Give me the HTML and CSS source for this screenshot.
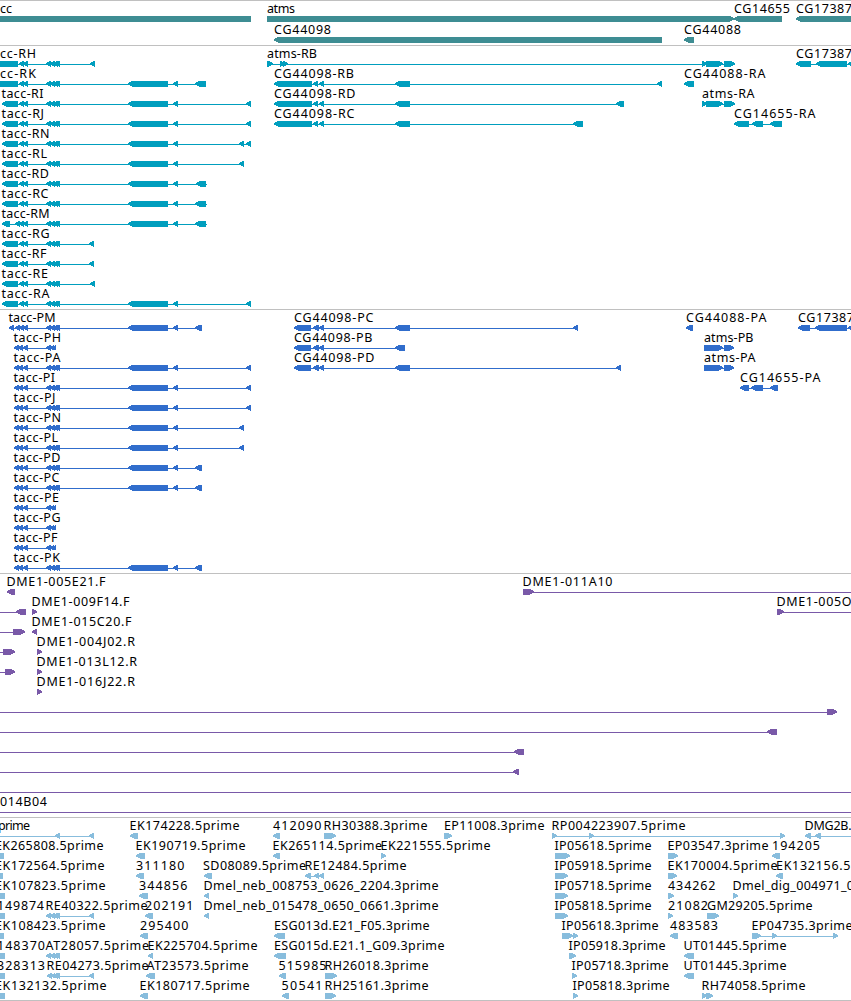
FILE: index.html
```html
<!DOCTYPE html>
<html lang="en">
<head>
<meta charset="utf-8">
<title>Genome browser</title>
<link rel="stylesheet" href="styles.css">
</head>
<body>
<main class="browser" id="browser"></main>
<script src="tracks.js"></script>
</body>
</html>
```
FILE: styles.css
```css
body { margin: 0; background: #fff; }
.browser { display: flex; flex-direction: column; width: 851px; height: 1001px; overflow: hidden; }
.track { flex: none; border-top: 1px solid #c0c0c0; box-sizing: border-box; overflow: hidden; }
.track svg { display: block; }
.track path { shape-rendering: crispEdges; }
.track text { font-family: "Noto Sans", "DejaVu Sans", sans-serif; font-size: 12.5px; fill: #000; }
.genes { height: 45px; fill: #3e8d93; }
.transcripts { height: 264px; fill: #009ebe; }
.proteins { height: 264px; fill: #306dcc; }
.clones { height: 244px; fill: #7959a8; }
.ests { height: 183px; fill: #88bddd; }
.end { height: 1px; }
```
FILE: tracks.js
```js
// Label: [row, text, start, end].
// Feature: [row, direction, line start, line end, exon start, exon end, ...].
const tail = [128, 168, 173, 178];
const cluster = [46, 51, 50, 55, 53, 58, 55, 60];
const utr = [2, 18, 19, 24, 23, 28, ...cluster];
const cds = [14, 19, 18, 23, 23, 28];
const atms = [702, 707, 706, 723, 724, 735];
const cg = [274, 312, 313, 318, 319, 324, 395, 410];
const cgp = [294, 311, 313, 319, 319, 324];

const tracks = [
  { name: "genes", top: 0, height: 45, pitch: 21, base: 13, glyph: 16,
    labels: [[0, "cc", 0, 12], [0, "atms", 267, 295], [0, "CG14655", 734, 790], [0, "CG17387", 796, 852],
      [1, "CG44098", 274, 331], [1, "CG44088", 684, 741]],
    features: [[0, "B", 0, 0, 0, 251], [0, "R", 0, 0, 267, 734], [0, "L", 0, 0, 734, 782],
      [0, "L", 0, 0, 796, 865], [1, "L", 0, 0, 274, 662], [1, "L", 0, 0, 684, 694]] },
  { name: "transcripts", top: 45, height: 264, pitch: 20, base: 58, glyph: 61,
    labels: [[0, "cc-RH", 0, 36], [1, "cc-RK", 0, 36],
      ...["RI", "RJ", "RN", "RL", "RD", "RC", "RM", "RG", "RF", "RE", "RA"].map((s, i) =>
        [i + 2, "tacc-" + s, 1.5, [43.5, 44, 49.5, 47, 49, 48.5, 49.5, 49.5, 46.5, 48, 49.5][i]]),
      [0, "atms-RB", 267, 317], [0, "CG17387", 796, 852],
      [1, "CG44098-RB", 274, 354], [2, "CG44098-RD", 274, 355.5], [3, "CG44098-RC", 274, 354.5],
      [1, "CG44088-RA", 684, 765.5], [2, "atms-RA", 702, 754.5], [3, "CG14655-RA", 734, 815.5]],
    features: [[0, "L", 0, 95, -10, 18, 19, 24, 23, 28, ...cluster, 90, 95],
      [1, "L", 0, 206, -10, 18, 19, 24, 23, 28, ...cluster, ...tail, 195, 206],
      [2, "L", 2, 251, ...utr, ...tail, 246, 251],
      [3, "L", 2, 251, ...utr, ...tail, 246, 251],
      [4, "L", 2, 251, ...utr, ...tail, 239, 244, 246, 251],
      [5, "L", 2, 244, ...utr, ...tail, 239, 244],
      [6, "L", 2, 207, ...utr, ...tail, 196, 206],
      [7, "L", 2, 207, ...utr, ...tail, 195, 206],
      [8, "L", 2, 207, 2, 10, 15, 20, 19, 24, 23, 28, ...cluster, ...tail, 195, 206],
      [9, "L", 2, 94, ...utr, 89, 94],
      [10, "L", 2, 94, ...utr, 89, 94],
      [11, "L", 2, 95, ...utr, 90, 95],
      [12, "L", 2, 251, ...utr, ...tail, 246, 251],
      [0, "R", 267, 735, 267, 273, 280, 285, 283, 288, ...atms],
      [1, "L", 274, 662, ...cg, 657, 662],
      [2, "L", 274, 624, ...cg, 616, 624],
      [3, "L", 274, 583, ...cg, 573, 583],
      [1, "L", 0, 0, 684, 694],
      [2, "R", 702, 735, ...atms],
      [3, "L", 734, 782, 734, 749, 752, 763, 770, 782],
      [0, "L", 796, 851, 796, 811, 816, 847, 848, 857]] },
  { name: "proteins", top: 309, height: 264, pitch: 20, base: 322, glyph: 325,
    labels: [[0, "tacc-PM", 8.5, 55.5],
      ...["PH", "PA", "PI", "PJ", "PN", "PL", "PD", "PC", "PE", "PG", "PF", "PK"].map((s, i) =>
        [i + 1, "tacc-" + s, 13.5, [61, 60.5, 55, 55.5, 61, 58, 60.5, 59.5, 59, 60.5, 57.5, 60][i]]),
      [0, "CG44098-PC", 294, 373.5], [1, "CG44098-PB", 294, 372.5], [2, "CG44098-PD", 294, 374.5],
      [0, "CG44088-PA", 686, 766.5], [0, "CG17387", 798, 854],
      [1, "atms-PB", 704, 753.5], [2, "atms-PA", 704, 755.5], [3, "CG14655-PA", 740, 820.5]],
    features: [[0, "L", 9, 202, 9, 14, 15, 20, 19, 24, 23, 28, ...cluster, ...tail, 195, 202],
      ...[1, 9, 10, 11].map(r => [r, "L", 14, 56, ...cds, 46, 51, 50, 54, 52, 56]),
      ...[2, 3, 4].map(r => [r, "L", 14, 251, ...cds, ...cluster, ...tail, 246, 251]),
      ...[5, 6].map(r => [r, "L", 14, 244, ...cds, ...cluster, ...tail, 239, 244]),
      ...[7, 8, 12].map(r => [r, "L", 14, 202, ...cds, ...cluster, ...tail, 195, 202]),
      [0, "L", 294, 578, ...cgp, 395, 410, 573, 578],
      [1, "L", 294, 405, ...cgp, 395, 405],
      [2, "L", 294, 621, ...cgp, 395, 410, 616, 621],
      [0, "L", 0, 0, 686, 693],
      [1, "R", 704, 734, 704, 723, 724, 734],
      [2, "R", 704, 734, 704, 723, 724, 734],
      [3, "L", 740, 778, 740, 749, 751, 763, 770, 778],
      [0, "L", 798, 851, 798, 810, 815, 847, 848, 857]] },
  { name: "clones", top: 573, height: 244, pitch: 20, base: 586, glyph: 589,
    labels: [[0, "DME1-005E21.F", 6.5, 105.5], [1, "DME1-009F14.F", 31.5, 129.5],
      [2, "DME1-015C20.F", 31.5, 131.5], [3, "DME1-004J02.R", 36.5, 135], [4, "DME1-013L12.R", 36.5, 137],
      [5, "DME1-016J22.R", 36.5, 135], [0, "DME1-011A10", 522.5, 612.5], [1, "DME1-005O", 776.5, 851.5],
      [11, "014B04", 0, 47]],
    features: [[0, "L", 0, 0, 7, 15], [0, "R", 523, 851, 523, 534],
      [1, "L", 0, 26, 16, 26], [1, "R", 0, 0, 32, 37], [1, "R", 777, 851, 777, 784],
      [2, "R", 0, 25, 13, 25], [2, "L", 0, 0, 32, 37],
      [3, "R", 0, 15, 3, 15], [3, "R", 0, 0, 37, 42],
      [4, "R", 0, 15, 5, 15], [4, "R", 0, 0, 37, 42], [5, "R", 0, 0, 37, 42],
      [6, "R", 0, 837, 827, 837], [7, "L", 0, 777, 767, 777],
      [8, "L", 0, 524, 514, 524], [9, "L", 0, 519, 513, 519],
      [10, "L", 0, 851], [11, "L", 0, 851]] },
  { name: "ests", top: 817, height: 183, pitch: 20, base: 830, glyph: 833,
    labels: [[0, "prime", -2, 30], [0, "EK174228.5prime", 129.5, 239.5], [0, "412090", 273, 321.5],
      [0, "RH30388.3prime", 323.5, 427.5], [0, "EP11008.3prime", 444, 544.5],
      [0, "RP004223907.5prime", 551.5, 685.5], [0, "DMG2B.", 804.5, 851.5],
      [1, "EK265808.5prime", -5, 103.5], [1, "EK190719.5prime", 135.5, 245.5],
      [1, "EK265114.5prime", 272.5, 382], [1, "EK221555.5prime", 380.5, 490.5],
      [1, "IP05618.5prime", 554.5, 651.5], [1, "EP03547.3prime", 667.5, 768.5], [1, "194205", 772, 820],
      [2, "EK172564.5prime", -5, 104.5], [2, "311180", 136, 184.5], [2, "SD08089.5prime", 203, 306],
      [2, "RE12484.5prime", 304.5, 406.5], [2, "IP05918.5prime", 554.5, 651.5],
      [2, "EK170004.5prime", 667.5, 777.5], [2, "EK132156.5", 776, 850.5],
      [3, "EK107823.5prime", -5, 105.5], [3, "344856", 139, 187.5],
      [3, "Dmel_neb_008753_0626_2204.3prime", 203.5, 438.5], [3, "IP05718.5prime", 554.5, 651.5],
      [3, "434262", 668, 715.5], [3, "Dmel_dig_004971_0", 732.5, 854],
      [4, "149874", -3, 44], [4, "RE40322.5prime", 45.5, 147.5], [4, "202191", 145, 193.5],
      [4, "Dmel_neb_015478_0650_0661.3prime", 203.5, 438.5], [4, "IP05818.5prime", 554.5, 651.5],
      [4, "21082", 668, 708], [4, "GM29205.5prime", 707, 812.5],
      [5, "EK108423.5prime", -5, 105.5], [5, "295400", 140, 188.5],
      [5, "ESG013d.E21_F05.3prime", 274, 429.5], [5, "IP05618.3prime", 561.5, 658.5],
      [5, "483583", 670, 718], [5, "EP04735.3prime", 751.5, 852.5],
      [6, "148370", -3, 45], [6, "AT28057.5prime", 45.5, 149], [6, "EK225704.5prime", 147.5, 257.5],
      [6, "ESG015d.E21.1_G09.3prime", 274, 444.5], [6, "IP05918.3prime", 568.5, 665.5],
      [6, "UT01445.5prime", 683.5, 786.5],
      [7, "328313", -3, 45], [7, "RE04273.5prime", 46.5, 148.5], [7, "AT23573.5prime", 146.5, 248.5],
      [7, "515985", 278.5, 326.5], [7, "RH26018.3prime", 324.5, 428.5],
      [7, "IP05718.3prime", 571.5, 668.5], [7, "UT01445.3prime", 683.5, 786.5],
      [8, "EK132132.5prime", -5, 106.5], [8, "EK180717.5prime", 139.5, 249.5], [8, "50541", 281.5, 322.5],
      [8, "RH25161.3prime", 324.5, 428.5], [8, "IP05818.3prime", 572.5, 669.5],
      [8, "RH74058.5prime", 701.5, 805.5]],
    features: [[0, "L", 0, 94, 55, 60, 89, 94], [0, "L", 0, 0, 130, 138], [0, "L", 0, 0, 273, 280],
      [0, "R", 0, 0, 324, 336], [0, "R", 0, 0, 444, 452],
      [0, "R", 552, 785, 552, 557, 589, 594, 780, 785], [0, "L", 805, 851, 805, 811, 815, 821],
      [1, "L", 0, 0, -6, 4], [1, "L", 0, 0, 136, 145], [1, "L", 0, 0, 273, 280], [1, "R", 0, 0, 381, 386],
      [1, "R", 0, 0, 555, 570], [1, "R", 0, 0, 668, 678], [1, "L", 0, 0, 772, 780],
      [2, "L", 0, 0, -6, 3], [2, "L", 0, 0, 136, 144], [2, "L", 0, 0, 204, 212],
      [2, "L", 305, 324, 305, 311, 314, 319, 319, 324], [2, "R", 0, 0, 555, 568],
      [2, "R", 0, 0, 668, 677], [2, "L", 0, 0, 776, 783],
      [3, "L", 0, 0, -6, 5], [3, "L", 0, 0, 139, 148], [3, "L", 0, 0, 204, 209],
      [3, "R", 0, 0, 555, 568], [3, "R", 0, 0, 668, 674], [3, "R", 0, 0, 733, 738],
      [4, "L", 0, 0, -6, 5], [4, "L", 46, 94, ...cluster, 89, 94], [4, "L", 0, 0, 145, 153],
      [4, "L", 0, 0, 204, 209], [4, "R", 0, 0, 555, 568], [4, "R", 0, 0, 668, 673], [4, "R", 0, 0, 707, 719],
      [5, "L", 0, 0, -6, 4], [5, "L", 0, 0, 140, 148], [5, "L", 0, 0, 274, 285],
      [5, "R", 562, 578, 562, 573, 573, 578], [5, "L", 0, 0, 670, 678],
      [5, "R", 752, 838, 752, 761, 772, 777, 833, 838],
      [6, "L", 0, 0, -6, 5], [6, "L", 46, 60, ...cluster], [6, "L", 0, 0, 148, 153],
      [6, "L", 0, 0, 274, 286], [6, "R", 0, 0, 569, 576], [6, "L", 0, 0, 684, 694],
      [7, "L", 0, 0, -6, 5], [7, "L", 47, 94, 47, 52, 51, 55, 53, 58, 55, 60, 89, 94],
      [7, "L", 0, 0, 146, 155], [7, "L", 0, 0, 279, 286], [7, "R", 0, 0, 325, 337],
      [7, "R", 0, 0, 572, 577], [7, "L", 0, 0, 684, 694],
      [8, "L", 0, 0, -6, 5], [8, "L", 0, 0, 140, 148], [8, "L", 0, 0, 282, 289],
      [8, "R", 0, 0, 325, 336], [8, "R", 0, 0, 573, 578], [8, "R", 0, 0, 702, 707, 706, 713]] }
];

function exon(direction, a, b, y) {
  if (direction === "B") return `M${a} ${y}H${b}V${y + 6}H${a}Z`;
  const s = direction === "L" ? 1 : -1;
  const tip = direction === "L" ? a : b;
  const back = direction === "L" ? b : a;
  return `M${back} ${y}V${y + 6}H${tip + 4 * s}V${y + 5}H${tip + 2 * s}V${y + 4}H${tip}` +
    `V${y + 2}H${tip + s}V${y + 1}H${tip + 3 * s}V${y}Z`;
}

function drawTrack(t) {
  const shapes = t.features.map(([row, direction, start, end, ...exons]) => {
    const y = t.glyph + row * t.pitch;
    let out = end > start ? `<path d="M${start} ${y + 3}H${end}V${y + 4}H${start}Z"/>` : "";
    for (let i = 0; i < exons.length; i += 2)
      out += `<path d="${exon(direction, exons[i], exons[i + 1], y)}"/>`;
    return out;
  }).join("");
  const labels = t.labels.map(([row, text, start, end]) =>
    `<text x="${start}" y="${t.base + row * t.pitch}" textLength="${end - start}" lengthAdjust="spacing">${text}</text>`
  ).join("");
  return `<section class="track ${t.name}"><svg width="851" height="${t.height - 1}" viewBox="0 ${t.top + 1} 851 ${t.height - 1}">${shapes}${labels}</svg></section>`;
}

document.getElementById("browser").innerHTML =
  tracks.map(drawTrack).join("") + '<div class="track end"></div>';
```
